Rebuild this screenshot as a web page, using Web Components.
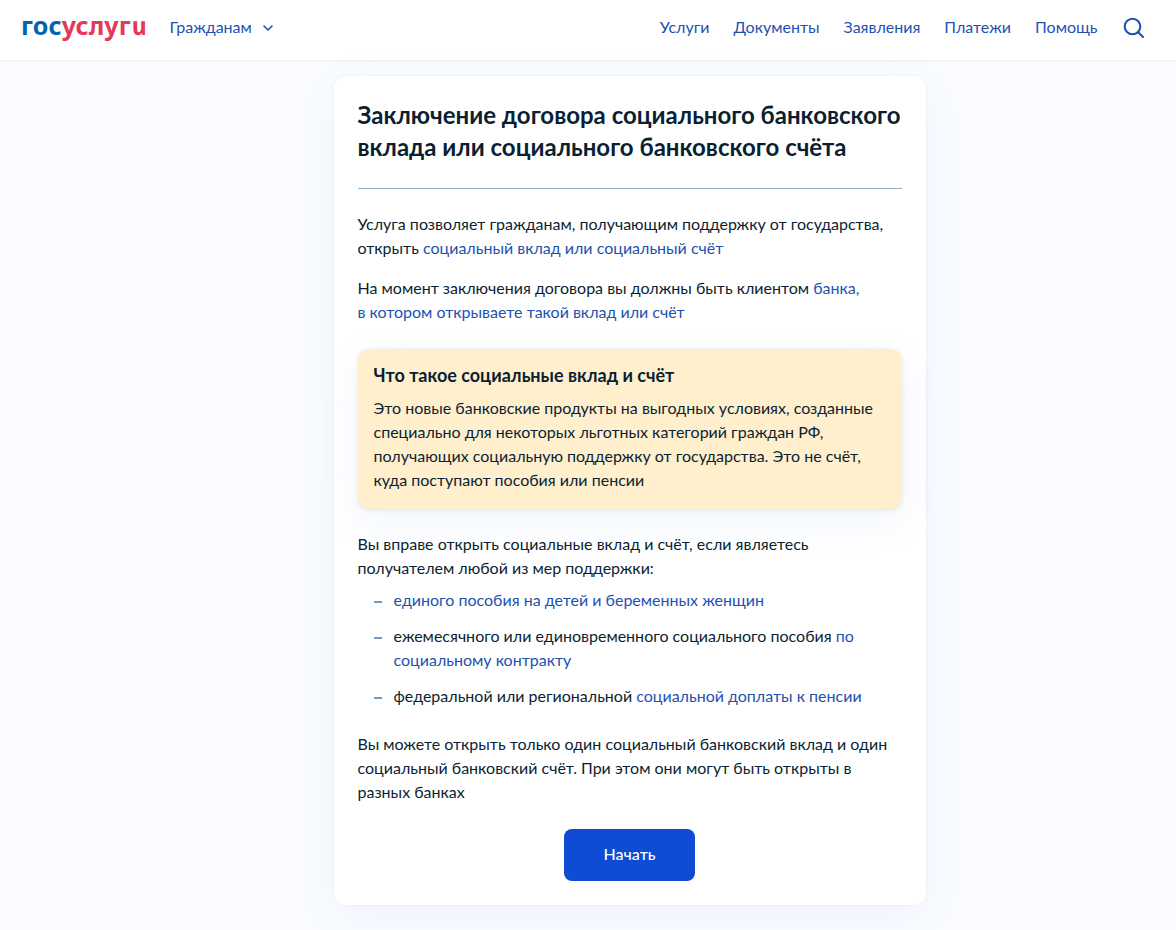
<!DOCTYPE html>
<html lang="ru">
<head>
<meta charset="utf-8">
<title>Заключение договора социального банковского вклада</title>
<style>
  body {
    margin: 0;
    min-height: 930px;
    background: #fafcff;
    color: #0b1f33;
    font: 16px/24px Lato, "Open Sans", sans-serif;
    --link: #1d52b0;
  }
</style>
</head>
<body>

<service-page>
  <site-header slot="header">
    <nav-link>Услуги</nav-link>
    <nav-link>Документы</nav-link>
    <nav-link>Заявления</nav-link>
    <nav-link>Платежи</nav-link>
    <nav-link>Помощь</nav-link>
  </site-header>

  <service-card>
    <span slot="heading">Заключение договора социального банковского вклада или социального банковского счёта</span>

    <text-block>Услуга позволяет гражданам, получающим поддержку от государства,<br>открыть <text-link>социальный вклад или социальный счёт</text-link></text-block>
    <text-block class="next">На момент заключения договора вы должны быть клиентом <text-link>банка,<br>в котором открываете такой вклад или счёт</text-link></text-block>

    <info-box>
      <span slot="heading">Что такое социальные вклад и счёт</span>
      Это новые банковские продукты на выгодных условиях, созданные<br>специально для некоторых льготных категорий граждан РФ,<br>получающих социальную поддержку от государства. Это не счёт,<br>куда поступают пособия или пенсии
    </info-box>

    <text-block>Вы вправе открыть социальные вклад и счёт, если являетесь<br>получателем любой из мер поддержки:</text-block>
    <dash-list>
      <dash-item><text-link>единого пособия на детей и беременных женщин</text-link></dash-item>
      <dash-item>ежемесячного или единовременного социального пособия <text-link>по<br>социальному контракту</text-link></dash-item>
      <dash-item>федеральной или региональной <text-link>социальной доплаты к пенсии</text-link></dash-item>
    </dash-list>

    <text-block>Вы можете открыть только один социальный банковский вклад и один<br>социальный банковский счёт. При этом они могут быть открыты в<br>разных банках</text-block>

    <main-button>Начать</main-button>
  </service-card>
</service-page>

<script>
const define = (name, html) => {
  const template = document.createElement('template');
  template.innerHTML = html;

  window.customElements.define(name, class extends HTMLElement {
    constructor() {
      super();
      this.attachShadow({ mode: 'open' });
      this.shadowRoot.appendChild(template.content.cloneNode(true));
    }
  });
};

define('service-page', `
  <style>
    :host {
      display: block;
    }

    main {
      display: flex;
      justify-content: center;
      padding: 16px 0 25px 84px;
    }
  </style>

  <slot name="header"></slot>
  <main><slot></slot></main>
`);

define('site-logo', `
  <style>
    :host {
      display: block;
      width: 125px;
      margin-bottom: 7px;
      color: #e5395a;
      font: 700 25px/32px "Noto Sans", "Open Sans", sans-serif;
      letter-spacing: 0.15px;
      white-space: nowrap;
    }

    .blue {
      color: #0065b1;
    }

    /* italic form of the letter, set upright again */
    .last {
      display: inline-block;
      font-style: italic;
      transform: skewX(12deg);
    }
  </style>

  <span class="blue">гос</span>услуг<span class="last">и</span>
`);

define('site-header', `
  <style>
    :host {
      display: flex;
      align-items: center;
      box-sizing: border-box;
      height: 60px;
      padding: 0 31px 4px 21px;
      background: #fff;
      box-shadow: 0 1px 2px rgba(11, 31, 80, 0.07);
      color: var(--link);
    }

    .audience {
      display: flex;
      align-items: center;
      gap: 11px;
      margin-left: 23.5px;
    }

    .audience span {
      margin-bottom: 2px;
    }

    nav {
      display: flex;
      gap: 24px;
      margin: 0 0 2px auto;
    }

    .search {
      margin-left: 25.5px;
    }

    svg {
      display: block;
      fill: none;
      stroke: currentColor;
      stroke-linecap: round;
      stroke-linejoin: round;
    }
  </style>

  <site-logo></site-logo>
  <div class="audience">
    <span>Гражданам</span>
    <svg width="10" height="8" viewBox="0 0 10 8" stroke-width="1.6"><path d="M1 2l4 4 4-4"/></svg>
  </div>
  <nav><slot></slot></nav>
  <svg class="search" width="22" height="24" viewBox="0 0 22 24" stroke-width="2.1"><circle cx="9.5" cy="10.5" r="7.8"/><path d="M15 16l5 5"/></svg>
`);

define('nav-link', `
  <style>
    :host {
      display: block;
      color: var(--link);
    }
  </style>

  <slot></slot>
`);

define('service-card', `
  <style>
    :host {
      display: block;
      box-sizing: border-box;
      width: 592px;
      padding: 23px 24px 24px;
      border-radius: 12px;
      background: #fff;
      box-shadow: 0 0 3px rgba(60, 90, 170, 0.08), 0 12px 48px rgba(80, 120, 210, 0.07);
    }

    h1 {
      margin: 0 0 23px;
      padding-bottom: 25px;
      border-bottom: 1px solid #97afc6;
      font-size: 24px;
      font-weight: 700;
      line-height: 32px;
    }

    ::slotted(span) {
      display: block;
      margin-left: -0.5px;
    }
  </style>

  <h1><slot name="heading"></slot></h1>
  <slot></slot>
`);

define('text-block', `
  <style>
    :host {
      display: block;
      margin-left: -0.5px;
    }

    :host(.next) {
      margin-top: 16px;
    }
  </style>

  <slot></slot>
`);

define('text-link', `
  <style>
    :host {
      display: inline;
      color: var(--link);
    }
  </style>

  <slot></slot>
`);

define('info-box', `
  <style>
    :host {
      display: block;
      margin: 25px 0 23px;
      padding: 14px 15.5px 17px;
      border-radius: 12px;
      background: #ffefcd;
      box-shadow: 0 1px 4px rgba(60, 90, 140, 0.12), 0 12px 40px rgba(80, 120, 200, 0.08);
    }

    h2 {
      margin: 0 0 9px;
      font-size: 18px;
      font-weight: 700;
      line-height: 24px;
    }
  </style>

  <h2><slot name="heading"></slot></h2>
  <slot></slot>
`);

define('dash-list', `
  <style>
    :host {
      display: flex;
      flex-direction: column;
      gap: 12px;
      margin: 8px 0 24px;
      padding-left: 16px;
    }
  </style>

  <slot></slot>
`);

define('dash-item', `
  <style>
    :host {
      display: flex;
      gap: 11.5px;
    }

    i {
      flex: none;
      width: 8px;
      height: 2px;
      margin-top: 13px;
      background: #6a9bce;
    }
  </style>

  <i></i>
  <div><slot></slot></div>
`);

define('main-button', `
  <style>
    :host {
      display: flex;
      justify-content: center;
      margin: 25px 1px 0 0;
    }

    button {
      width: 131px;
      height: 52px;
      padding: 0 0 2px;
      border: 0;
      border-radius: 8px;
      background: #0d4cd3;
      color: #fff;
      font: 500 16px/24px Lato, "Open Sans", sans-serif;
    }
  </style>

  <button><slot></slot></button>
`);
</script>
</body>
</html>
